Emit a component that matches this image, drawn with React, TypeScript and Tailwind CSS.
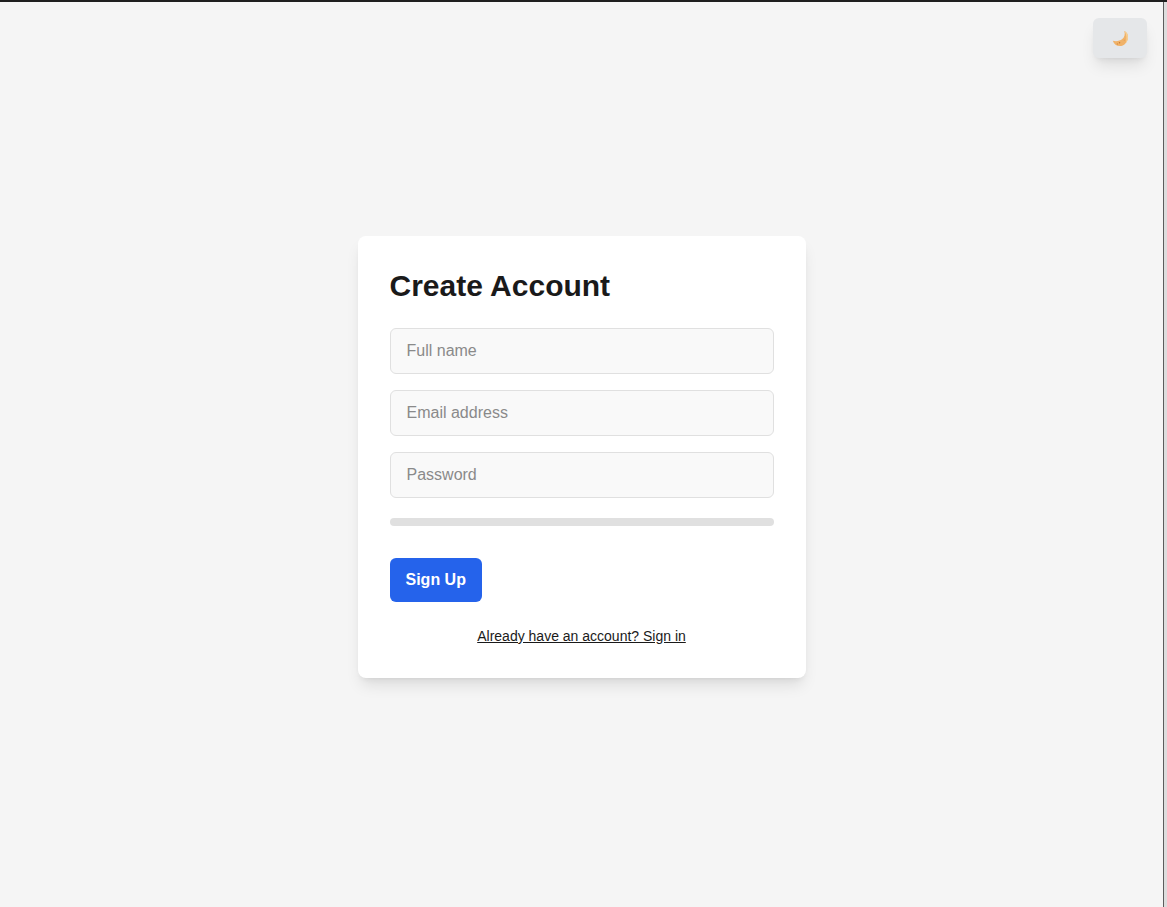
import React, { useState } from 'react';

const fields = [
  { id: 'name', label: 'Full name', type: 'text' },
  { id: 'email', label: 'Email address', type: 'email' },
  { id: 'password', label: 'Password', type: 'password' },
];

function MoonIcon() {
  return (
    <svg width="18" height="18" viewBox="0 0 18 18" fill="none" aria-hidden="true">
      <path
        d="M13.3 2C15.8 3.1 17.2 5.6 17 8.4C16.8 13.2 13 17 8.8 17C5.6 17 2.9 15 1.8 11.7C5.2 12.6 8.6 12.1 11.3 10C13.6 8.1 14.3 5.2 13.3 2Z"
        fill="#F0B268"
      />
      <path d="M13.3 2C15.8 3.1 17.2 5.6 17 8.4C16.9 10.6 16.1 12.6 14.8 14.1C15.9 10 15.8 5.6 13.3 2Z" fill="#F7CF92" />
      <circle cx="8.6" cy="13.8" r="0.7" fill="#C97A30" />
      <circle cx="6.4" cy="15" r="0.7" fill="#D98C40" />
      <circle cx="13.3" cy="11.2" r="0.6" fill="#E39F55" />
    </svg>
  );
}

function SignUpCard() {
  const [password, setPassword] = useState('');
  const strength = Math.min(password.length * 10, 100);

  return (
    <div className="w-full max-w-md rounded-lg bg-white p-8 shadow-lg">
      <h1 className="mb-6 text-3xl font-bold text-[#1a1a1a]">Create Account</h1>

      <form onSubmit={(e) => e.preventDefault()}>
        <div className="flex flex-col gap-4">
          {fields.map((field) => (
            <input
              key={field.id}
              id={field.id}
              type={field.type}
              placeholder={field.label}
              aria-label={field.label}
              onChange={field.id === 'password' ? (e) => setPassword(e.target.value) : undefined}
              className="w-full rounded-md border border-[#e0e0e0] bg-[#f9f9f9] px-4 py-2.5 text-base text-[#1a1a1a] placeholder:text-[#8a8a8a]"
            />
          ))}
        </div>

        {/* Password strength */}
        <div className="mt-5 h-2 w-full overflow-hidden rounded-full bg-[#e0e0e0]">
          <div className="h-full bg-blue-600" style={{ width: `${strength}%` }} />
        </div>

        <button type="submit" className="mt-8 rounded-md bg-[#2563eb] px-4 py-2.5 text-base font-bold text-white">
          Sign Up
        </button>
      </form>

      <div className="mt-6 flex justify-center">
        <a href="#" className="text-sm text-[#1a1a1a] underline">
          Already have an account? Sign in
        </a>
      </div>
    </div>
  );
}

export default function App() {
  return (
    <div className="flex min-h-screen flex-col border-t-2 border-[#1f1f1f] bg-[#f5f5f5] font-['Liberation_Sans',Arial,sans-serif]">
      <div className="flex flex-1">
        <main className="relative flex flex-1 items-center justify-center pt-1">
          <button
            type="button"
            aria-label="Toggle dark mode"
            className="absolute top-4 right-4 flex h-10 w-[54px] items-center justify-center rounded-md bg-[#e5e7e9] shadow-lg"
          >
            <MoonIcon />
          </button>
          <SignUpCard />
        </main>

        {/* Window edge */}
        <div className="w-1 border-l border-[#5c5c5c] bg-[#dddddd]" />
      </div>
    </div>
  );
}
